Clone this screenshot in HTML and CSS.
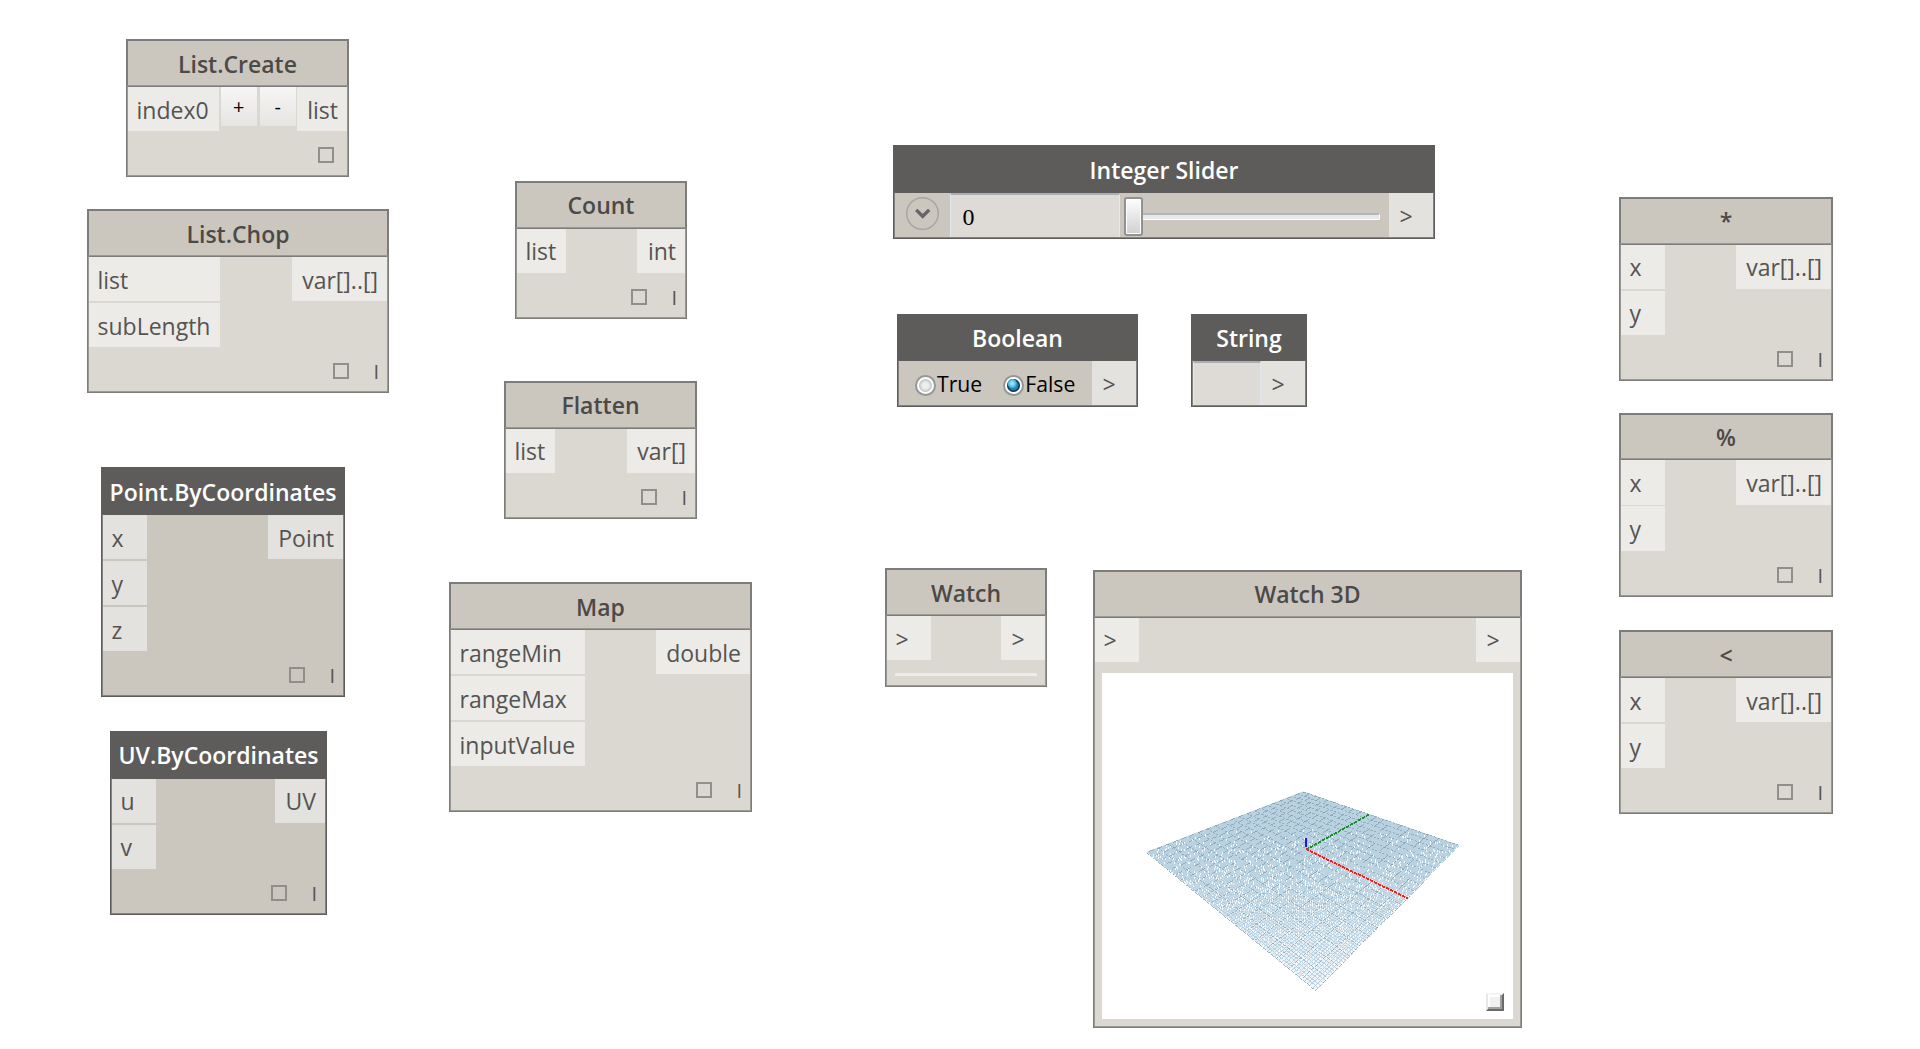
FILE: index.html
```html
<!DOCTYPE html>
<html lang="en">
<head>
<meta charset="utf-8">
<title>Node library</title>
<link rel="stylesheet" href="styles.css">
</head>
<body>
<main class="workspace">

  <section class="node list-create">
    <h2 class="title">List.Create</h2>
    <div class="body">
      <div class="row">
        <div class="ports"><span class="port">index0</span></div>
        <div class="buttons"><button class="btn">+</button><button class="btn">-</button></div>
        <div class="ports out"><span class="port">list</span></div>
      </div>
      <div class="footer"><i class="box"></i></div>
    </div>
  </section>

  <section class="node list-chop">
    <h2 class="title">List.Chop</h2>
    <div class="body">
      <div class="row">
        <div class="ports"><span class="port">list</span><span class="port">subLength</span></div>
        <div class="ports out"><span class="port">var[]..[]</span></div>
      </div>
      <div class="footer"><i class="box"></i><span class="lacing">I</span></div>
    </div>
  </section>

  <section class="node dark point">
    <h2 class="title">Point.ByCoordinates</h2>
    <div class="body">
      <div class="row">
        <div class="ports"><span class="port">x</span><span class="port">y</span><span class="port">z</span></div>
        <div class="ports out"><span class="port">Point</span></div>
      </div>
      <div class="footer"><i class="box"></i><span class="lacing">I</span></div>
    </div>
  </section>

  <section class="node dark snug uv">
    <h2 class="title">UV.ByCoordinates</h2>
    <div class="body">
      <div class="row">
        <div class="ports"><span class="port">u</span><span class="port">v</span></div>
        <div class="ports out"><span class="port">UV</span></div>
      </div>
      <div class="footer"><i class="box"></i><span class="lacing">I</span></div>
    </div>
  </section>

  <section class="node snug count">
    <h2 class="title">Count</h2>
    <div class="body">
      <div class="row">
        <div class="ports"><span class="port">list</span></div>
        <div class="ports out"><span class="port">int</span></div>
      </div>
      <div class="footer"><i class="box"></i><span class="lacing">I</span></div>
    </div>
  </section>

  <section class="node snug flatten">
    <h2 class="title">Flatten</h2>
    <div class="body">
      <div class="row">
        <div class="ports"><span class="port">list</span></div>
        <div class="ports out"><span class="port">var[]</span></div>
      </div>
      <div class="footer"><i class="box"></i><span class="lacing">I</span></div>
    </div>
  </section>

  <section class="node map">
    <h2 class="title">Map</h2>
    <div class="body">
      <div class="row">
        <div class="ports"><span class="port">rangeMin</span><span class="port">rangeMax</span><span class="port">inputValue</span></div>
        <div class="ports out"><span class="port">double</span></div>
      </div>
      <div class="footer"><i class="box"></i><span class="lacing">I</span></div>
    </div>
  </section>

  <section class="node dark slider">
    <h2 class="title">Integer Slider</h2>
    <div class="body">
      <div class="row">
        <svg class="expander" viewBox="0 0 33 34" width="33" height="34">
          <circle cx="16.5" cy="17.5" r="15.8" fill="none" stroke="#a5a5a5" stroke-width="1.4"/>
          <path d="M10.2 13.9 16.7 20.3 23.2 13.9" fill="none" stroke="#666" stroke-width="3.4"/>
        </svg>
        <div class="field number">0</div>
        <div class="track"><i class="groove"></i><i class="thumb"></i></div>
        <div class="ports out"><span class="port">&gt;</span></div>
      </div>
    </div>
  </section>

  <section class="node dark snug boolean">
    <h2 class="title">Boolean</h2>
    <div class="body">
      <div class="row">
        <div class="options">
          <label class="option"><i class="radio"></i>True</label>
          <label class="option"><i class="radio on"></i>False</label>
        </div>
        <div class="ports out"><span class="port">&gt;</span></div>
      </div>
    </div>
  </section>

  <section class="node dark snug string">
    <h2 class="title">String</h2>
    <div class="body">
      <div class="row">
        <div class="field"></div>
        <div class="ports out"><span class="port">&gt;</span></div>
      </div>
    </div>
  </section>

  <section class="node watch">
    <h2 class="title">Watch</h2>
    <div class="body">
      <div class="row">
        <div class="ports"><span class="port">&gt;</span></div>
        <div class="ports out"><span class="port">&gt;</span></div>
      </div>
      <div class="bar"></div>
    </div>
  </section>

  <section class="node snug watch3d">
    <h2 class="title">Watch 3D</h2>
    <div class="body">
      <div class="row">
        <div class="ports"><span class="port">&gt;</span></div>
        <div class="ports out"><span class="port">&gt;</span></div>
      </div>
      <div class="view">
        <canvas class="scene" id="scene" width="411" height="346"></canvas>
        <i class="grip"></i>
      </div>
    </div>
  </section>

  <section class="node snug op multiply">
    <h2 class="title">*</h2>
    <div class="body">
      <div class="row">
        <div class="ports"><span class="port">x</span><span class="port">y</span></div>
        <div class="ports out"><span class="port">var[]..[]</span></div>
      </div>
      <div class="footer"><i class="box"></i><span class="lacing">I</span></div>
    </div>
  </section>

  <section class="node op modulo">
    <h2 class="title">%</h2>
    <div class="body">
      <div class="row">
        <div class="ports"><span class="port">x</span><span class="port">y</span></div>
        <div class="ports out"><span class="port">var[]..[]</span></div>
      </div>
      <div class="footer"><i class="box"></i><span class="lacing">I</span></div>
    </div>
  </section>

  <section class="node op less">
    <h2 class="title">&lt;</h2>
    <div class="body">
      <div class="row">
        <div class="ports"><span class="port">x</span><span class="port">y</span></div>
        <div class="ports out"><span class="port">var[]..[]</span></div>
      </div>
      <div class="footer"><i class="box"></i><span class="lacing">I</span></div>
    </div>
  </section>

</main>
<script src="scene.js"></script>
</body>
</html>
```
FILE: styles.css
```css
* { box-sizing: border-box; }
body {
  margin: 0;
  background: #fff;
  font-family: "Open Sans", "Noto Sans", sans-serif;
  font-size: 23px;
  color: #555452;
}
.workspace {
  position: relative;
  width: 1920px;
  height: 1049px;
  overflow: hidden;
}

/* node shell */
.node {
  --edge: #7c7c7a;
  --edge-soft: #9b9994;
  --head: #cbc6be;
  --fill: #dbd8d1;
  --port: #ecebe7;
  --line: 46px;
  position: absolute;
  display: flex;
  flex-direction: column;
  border: 1px solid var(--edge);
  background: var(--fill);
}
.node.snug { --line: 44px; }
.node.dark {
  --edge: #5d5c5a;
  --edge-soft: #858380;
  --head: #5d5c5a;
  --fill: #cbc6be;
  --port: #e3e2de;
}
.title {
  flex: none;
  height: 46px;
  margin: 0;
  border: 1px solid var(--edge);
  border-bottom-color: var(--edge-soft);
  background: var(--head);
  color: #4b4a48;
  font-size: 23px;
  font-weight: 600;
  line-height: var(--line);
  text-align: center;
  white-space: nowrap;
}
.dark .title { color: #fff; border-color: var(--edge); }
.body {
  flex: 1;
  display: flex;
  flex-direction: column;
  border: 1px solid var(--edge-soft);
  border-top-color: var(--edge);
}
.row { display: flex; justify-content: space-between; }
.ports { display: flex; flex-direction: column; gap: 2px; }
.port {
  height: 44px;
  min-width: 44px;
  padding: 0 10px 0 8.5px;
  background: var(--port);
  line-height: var(--line);
  white-space: nowrap;
}
.out .port { padding: 0 9px 0 10.5px; }
.footer {
  flex: 1;
  display: flex;
  justify-content: flex-end;
  align-items: flex-start;
  padding: 16px 13px 0 0;
}
.box {
  width: 16px;
  height: 16px;
  border: 2px solid #918f8a;
}
.lacing {
  width: 26px;
  margin: -1px -5px 0 4px;
  font-size: 20px;
  font-weight: 500;
  line-height: 20px;
  text-align: right;
}

/* node placement on the canvas */
.list-create { left: 126px; top: 39px; width: 223px; height: 138px; }
.list-chop { left: 87px; top: 209px; width: 302px; height: 184px; }
.point { left: 101px; top: 467px; width: 244px; height: 230px; }
.uv { left: 110px; top: 731px; width: 217px; height: 184px; }
.count { left: 515px; top: 181px; width: 172px; height: 138px; }
.flatten { left: 504px; top: 381px; width: 193px; height: 138px; }
.map { left: 449px; top: 582px; width: 303px; height: 230px; }
.slider { left: 893px; top: 145px; width: 542px; height: 94px; }
.boolean { left: 897px; top: 314px; width: 241px; height: 93px; }
.string { left: 1191px; top: 314px; width: 116px; height: 93px; }
.watch { left: 885px; top: 568px; width: 162px; height: 119px; }
.watch3d { left: 1093px; top: 570px; width: 429px; height: 458px; }
.op { left: 1619px; width: 214px; height: 184px; }
.multiply { top: 197px; }
.modulo { top: 413px; }
.less { top: 630px; }

.modulo .title { height: 45px; line-height: 44px; }
.modulo .ports { gap: 1px; }
.modulo .port { height: 45px; }

/* List.Create buttons */
.buttons { display: flex; gap: 3px; padding-left: 1px; }
.btn {
  width: 36px;
  height: 39px;
  padding: 1px 0 0;
  border: 0;
  background: linear-gradient(#f7f5f5, #e6e5e2);
  color: #000;
  font: 20px/38px "Open Sans", sans-serif;
}

/* inputs */
.field {
  width: 68px;
  height: 44px;
  border: solid #e2e6ee;
  border-width: 2px 1px 0;
  border-top-color: #abadb3;
  background: #dedbd6;
}
.field.number {
  width: 170px;
  padding-left: 11.5px;
  color: #000;
  font: 24px/45px "Liberation Serif", serif;
}
.expander { margin: 3px 11px 0 11px; }
.track {
  position: relative;
  width: 256px;
  height: 44px;
  margin: 0 9px 0 4px;
}
.groove {
  position: absolute;
  left: 0;
  right: 0;
  top: 20px;
  height: 7px;
  border: 1px solid #fff;
  border-top: 2px solid #b3b6b8;
  border-radius: 2px;
  background: #e7eaea;
}
.thumb {
  position: absolute;
  left: 0;
  top: 4px;
  width: 19px;
  height: 39px;
  border: 2px solid #929292;
  border-radius: 3px;
  background: linear-gradient(#fdfdfd, #d0d0d0);
  box-shadow: inset 0 0 0 1px #fff;
}

.boolean .title, .string .title { height: 45px; }
.boolean .port, .string .port { line-height: 46px; }
.options { display: flex; gap: 21px; height: 44px; padding-left: 16px; }
.option {
  display: flex;
  align-items: center;
  gap: 1px;
  height: 44px;
  color: #000;
  font-size: 21.2px;
  line-height: 47px;
}
.radio {
  width: 21px;
  height: 21px;
  margin-top: 4px;
  border: 2px solid #959696;
  border-radius: 50%;
  background: radial-gradient(circle at 50% 50%, #eceded 0 3px, #c4c8cc 6px, #fff 7px);
}
.radio.on {
  background:
    radial-gradient(circle at 42% 38%, #a5e2f5 0 1px, #3eb3e0 4px, transparent 5px),
    radial-gradient(circle at 50% 50%, #1f89b8 0 4px, #173c5c 5.4px 6px, #fff 7px);
}

.bar { height: 3px; margin: 13px 8px 0; background: #ecebe7; }

/* 3D preview */
.view {
  position: relative;
  width: 411px;
  height: 346px;
  margin: 11px 7px 0;
  background: #fff;
}
.scene { display: block; }
.grip {
  position: absolute;
  right: 9px;
  bottom: 8px;
  width: 18px;
  height: 18px;
  border: 2px solid;
  border-color: #f3f3f3 #696969 #696969 #e8e8e8;
  background: #f0f0f0;
  box-shadow: inset -2px -2px #a0a0a0, inset 2px 2px #fff;
}
```
FILE: scene.js
```js
// Ground grid in perspective, plotted as unsmoothed one-pixel lines.
const ctx = document.getElementById('scene').getContext('2d');
const L = [44.5, 179], R = [357, 172], B = [213, 317], T = [201, 118.5];

// Unit square (0,0)=L (1,0)=B (1,1)=R (0,1)=T mapped to the view.
const dx1 = B[0] - R[0], dx2 = T[0] - R[0], sx = L[0] - B[0] + R[0] - T[0];
const dy1 = B[1] - R[1], dy2 = T[1] - R[1], sy = L[1] - B[1] + R[1] - T[1];
const det = dx1 * dy2 - dx2 * dy1;
const g = (sx * dy2 - dx2 * sy) / det, h = (dx1 * sy - sx * dy1) / det;
const a = B[0] - L[0] + g * B[0], b = T[0] - L[0] + h * T[0];
const d = B[1] - L[1] + g * B[1], e = T[1] - L[1] + h * T[1];
const project = (u, v) => {
  const w = g * u + h * v + 1;
  return [(a * u + b * v + L[0]) / w, (d * u + e * v + L[1]) / w];
};

function line(p, q, color, dashed) {
  ctx.fillStyle = color;
  const n = Math.ceil(Math.max(Math.abs(q[0] - p[0]), Math.abs(q[1] - p[1])));
  for (let i = 0; i <= n; i++) {
    const x = Math.round(p[0] + (q[0] - p[0]) * i / n);
    const y = Math.round(p[1] + (q[1] - p[1]) * i / n);
    if (dashed && (y < 215 ? (x + y) % 5 > 2 : x % 4 === 0)) continue;
    ctx.fillRect(x, y, 1, 1);
  }
}

// Distant cells are denser than the pixels, so they merge into a solid tone.
const haze = ctx.createLinearGradient(0, 119, 0, 317);
haze.addColorStop(0, 'rgba(185,210,225,1)');
haze.addColorStop(.28, 'rgba(185,210,225,1)');
haze.addColorStop(.5, 'rgba(185,210,225,.7)');
haze.addColorStop(.75, 'rgba(185,210,225,.4)');
haze.addColorStop(1, 'rgba(185,210,225,.2)');
ctx.fillStyle = haze;
ctx.beginPath();
for (const c of [L, B, R, T]) ctx.lineTo(c[0], c[1]);
ctx.fill();

const CELLS = 100;
for (const major of [false, true]) {
  for (let i = 0; i <= CELLS; i++) {
    if ((i % 5 === 0) !== major) continue;
    const t = i / CELLS, color = major ? 'rgba(125,148,162,.6)' : '#b9d2e1';
    line(project(t, 0), project(t, 1), color, major);
    line(project(0, t), project(1, t), color, major);
  }
}

ctx.fillStyle = 'rgba(255,255,255,.85)';
let seed = 7;
for (let i = 0; i < CELLS; i++) {
  for (let j = 0; j < CELLS; j++) {
    seed = (seed * 1103515245 + 12345) % 2147483648;
    const [x, y] = project((i + .5) / CELLS, (j + .5) / CELLS);
    const chance = Math.min(.32, Math.max(0, (y - 155) / 200));
    if (seed / 2147483648 < chance) ctx.fillRect(Math.round(x), Math.round(y), 1, 2);
  }
}

function axis(p, q, color, on) {
  const n = Math.round(Math.abs(q[0] - p[0]));
  ctx.fillStyle = color;
  for (let i = 0; i <= n; i++) {
    if (i % 4 >= on) continue;
    ctx.fillRect(Math.round(p[0] + (q[0] - p[0]) * i / n), Math.round(p[1] + (q[1] - p[1]) * i / n), 1, 2);
  }
}
const o = project(.5, .5);
axis(o, project(.5, 1), '#1d8a2c', 3);
axis(o, project(1, .5), '#ff1a1a', 3);
ctx.fillStyle = '#1414ff';
ctx.fillRect(Math.round(o[0]) - 1, Math.round(o[1]) - 10, 2, 9);
```
